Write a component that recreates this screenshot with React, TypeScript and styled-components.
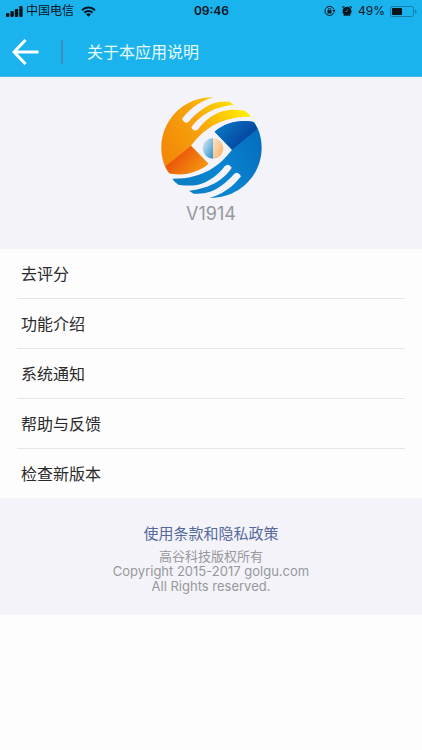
import React from "react";
import styled, { createGlobalStyle } from "styled-components";

const GlobalStyle = createGlobalStyle`
  * { box-sizing: border-box; }
  body {
    margin: 0;
    background: #fdfdfd;
    color: #222;
    font-family: Inter, "Noto Sans CJK SC", sans-serif;
  }
`;

const Header = styled.header`
  background: #1bb3ee;
  border-bottom: 1px solid #45b9e6;
`;

const StatusBar = styled.div`
  display: grid;
  grid-template-columns: 1fr auto 1fr;
  align-items: center;
  height: 22px;
  padding: 0 5px 0 6px;
  color: #06141c;
  font-size: 12px;
  line-height: 22px;
`;

const StatusGroup = styled.div<{ $end?: boolean }>`
  display: flex;
  align-items: center;
  justify-content: ${(p) => (p.$end ? "flex-end" : "flex-start")};
  gap: ${(p) => (p.$end ? "5px" : "3px")};
`;

const Carrier = styled.span`
  margin-right: 4px;
`;

const Clock = styled.time`
  font-weight: 600;
`;

const NavBar = styled.div`
  display: flex;
  align-items: center;
  height: 54px;
  padding: 6px 12px 0;
`;

const BackButton = styled.button`
  display: flex;
  padding: 0;
  border: 0;
  background: none;
  color: #fff;
  cursor: pointer;
`;

const Divider = styled.span`
  width: 2px;
  height: 24px;
  margin: 0 24px 0 22px;
  background: #3a92b5;
`;

const Title = styled.h1`
  margin: 0;
  color: #e6fbff;
  font-size: 16px;
  font-weight: 400;
  line-height: 24px;
`;

const Brand = styled.section`
  display: flex;
  flex-direction: column;
  align-items: center;
  padding: 20px 0 23px;
  background: #f3f3f9;
`;

const Version = styled.p`
  margin: 4px 0 0;
  color: #98989b;
  font-size: 18px;
  line-height: 24px;
`;

const Menu = styled.nav`
  padding: 0 17px;
  background: #fdfdfd;
`;

const MenuItem = styled.button`
  display: block;
  width: 100%;
  height: 50px;
  padding: 0 4px;
  border: 0;
  border-bottom: 1px solid #e6e6e8;
  background: none;
  color: #2a2a2a;
  font: inherit;
  font-size: 16px;
  line-height: 24px;
  text-align: left;
  cursor: pointer;

  &:last-child {
    height: 49px;
    border-bottom: 0;
  }
`;

const Footer = styled.footer`
  padding: 24px 0 21px;
  background: #f3f3f9;
  color: #98989b;
  font-size: 13px;
  line-height: 15px;
  text-align: center;
`;

const PolicyLink = styled.a`
  display: block;
  width: fit-content;
  margin: 0 auto 3px;
  color: #54699c;
  font-size: 15px;
  line-height: 24px;
  text-decoration: none;
`;

const Line = styled.p`
  margin: 0;
`;

const SignalIcon = () => (
  <svg width="17" height="11" viewBox="0 0 17 11" fill="currentColor" aria-hidden="true">
    <rect x="0" y="7" width="3.4" height="4" rx="1" />
    <rect x="4.4" y="5" width="3.4" height="6" rx="1" />
    <rect x="8.8" y="3" width="3.4" height="8" rx="1" />
    <rect x="13.2" y="0" width="3.4" height="11" rx="1" />
  </svg>
);

const WifiIcon = () => (
  <svg width="15" height="11" viewBox="0 0 15 11" aria-hidden="true">
    <g fill="none" stroke="currentColor" strokeWidth="2">
      <path d="M1 4.2a9.2 9.2 0 0 1 13 0" />
      <path d="M3.4 6.7a5.8 5.8 0 0 1 8.2 0" />
    </g>
    <path d="M7.5 10.7 5.2 8.4a3.3 3.3 0 0 1 4.6 0z" fill="currentColor" />
  </svg>
);

const RotationLockIcon = () => (
  <svg width="12" height="12" viewBox="0 0 12 12" fill="none" stroke="currentColor" aria-hidden="true">
    <path d="M9.9 7.5A4.6 4.6 0 1 1 10 4.6" />
    <path d="M8.3 5h3.4L10 7.2z" fill="currentColor" stroke="none" />
    <rect x="3.5" y="5.2" width="4" height="3.2" rx=".5" fill="currentColor" stroke="none" />
    <path d="M4.3 5.5v-1a1.2 1.2 0 0 1 2.4 0v1" strokeWidth=".9" />
  </svg>
);

const AlarmIcon = () => (
  <svg width="12" height="12" viewBox="0 0 12 12" fill="currentColor" aria-hidden="true">
    <circle cx="6" cy="6.3" r="4.5" />
    <path d="M1.2 3.6a2 2 0 0 1 2.7-2.5zM10.8 3.6a2 2 0 0 0-2.7-2.5zM2.3 11.3l1-2 1.2 1zM9.7 11.3l-1-2-1.2 1z" />
    <path d="M6.2 4.1v2.4H4.5" fill="none" stroke="#1bb3ee" strokeWidth=".6" />
  </svg>
);

const BatteryIcon = () => (
  <svg width="27" height="11" viewBox="0 0 27 11" aria-hidden="true">
    <rect x=".5" y=".5" width="23" height="10" rx="2" fill="none" stroke="#147da6" />
    <rect x="2" y="2" width="10" height="7" rx=".6" fill="currentColor" />
    <path d="M25 3.5q1.7.6 1.7 2t-1.7 2z" fill="#147da6" />
  </svg>
);

const BackIcon = () => (
  <svg width="27" height="26" viewBox="0 0 27 26" fill="none" stroke="currentColor" strokeWidth="3" aria-hidden="true">
    <path d="M13.5 1 2 13l11.5 12M2 13h24.5" />
  </svg>
);

const hand =
  "M188 21C96 20 31 91 31 172C31 202 39 230 55 249C95 258 143 246 172 220L120 166C155 120 205 78 299 79Q291 66 281 61C255 57 232 57 214 63C185 72 160 92 142 116Q130 127 121 112C140 82 180 50 249 43L235 34Q207 32 188 39C160 49 134 70 113 94Q102 103 93 86C118 52 155 29 188 21Z";
const palm = "M120 166L172 220C143 246 95 258 55 249Q48 239 44 228Z";

const Logo = () => (
  <svg width="101" height="101" viewBox="30 20 303 303" role="img" aria-label="高谷科技">
    <defs>
      <linearGradient id="orange" gradientUnits="userSpaceOnUse" x1="50" y1="190" x2="285" y2="60">
        <stop offset="0" stopColor="#f28a08" />
        <stop offset=".45" stopColor="#f7a30c" />
        <stop offset="1" stopColor="#ffee00" />
      </linearGradient>
      <linearGradient id="ember" gradientUnits="userSpaceOnUse" x1="80" y1="190" x2="145" y2="248">
        <stop offset="0" stopColor="#ea560a" />
        <stop offset="1" stopColor="#f79510" />
      </linearGradient>
      <linearGradient id="blue" gradientUnits="userSpaceOnUse" x1="50" y1="190" x2="285" y2="60">
        <stop offset="0" stopColor="#0670c0" />
        <stop offset=".5" stopColor="#0a86d2" />
        <stop offset="1" stopColor="#0c7cc2" />
      </linearGradient>
      <linearGradient id="navy" gradientUnits="userSpaceOnUse" x1="80" y1="190" x2="145" y2="248">
        <stop offset="0" stopColor="#0446a0" />
        <stop offset="1" stopColor="#0874c2" />
      </linearGradient>
      <linearGradient id="iris" x1="0" y1="0" x2="1" y2="1">
        <stop offset="0" stopColor="#e4f0f7" />
        <stop offset="1" stopColor="#2c91ca" />
      </linearGradient>
      <linearGradient id="glow" x1="0" y1="0" x2="1" y2="1">
        <stop offset="0" stopColor="#fbe5cd" />
        <stop offset="1" stopColor="#f6ae5b" />
      </linearGradient>
    </defs>
    <path d={hand} fill="url(#orange)" />
    <path d={palm} fill="url(#ember)" />
    <g transform="rotate(180 181.5 172)">
      <path d={hand} fill="url(#blue)" />
      <path d={palm} fill="url(#navy)" />
    </g>
    <path d="M186 143a31 31 0 0 0 0 62z" fill="url(#iris)" />
    <path d="M186 143a31 31 0 0 1 0 62z" fill="url(#glow)" />
  </svg>
);

const menuItems = ["去评分", "功能介绍", "系统通知", "帮助与反馈", "检查新版本"];

export default function App() {
  return (
    <>
      <GlobalStyle />
      <Header>
        <StatusBar>
          <StatusGroup>
            <SignalIcon />
            <Carrier>中国电信</Carrier>
            <WifiIcon />
          </StatusGroup>
          <Clock>09:46</Clock>
          <StatusGroup $end>
            <RotationLockIcon />
            <AlarmIcon />
            <span>49%</span>
            <BatteryIcon />
          </StatusGroup>
        </StatusBar>
        <NavBar>
          <BackButton type="button" aria-label="返回">
            <BackIcon />
          </BackButton>
          <Divider />
          <Title>关于本应用说明</Title>
        </NavBar>
      </Header>
      <main>
        <Brand>
          <Logo />
          <Version>V1914</Version>
        </Brand>
        <Menu>
          {menuItems.map((item) => (
            <MenuItem key={item} type="button">
              {item}
            </MenuItem>
          ))}
        </Menu>
      </main>
      <Footer>
        <PolicyLink href="#policy">使用条款和隐私政策</PolicyLink>
        <Line>高谷科技版权所有</Line>
        <Line>Copyright 2015-2017 golgu.com</Line>
        <Line>All Rights reserved.</Line>
      </Footer>
    </>
  );
}
